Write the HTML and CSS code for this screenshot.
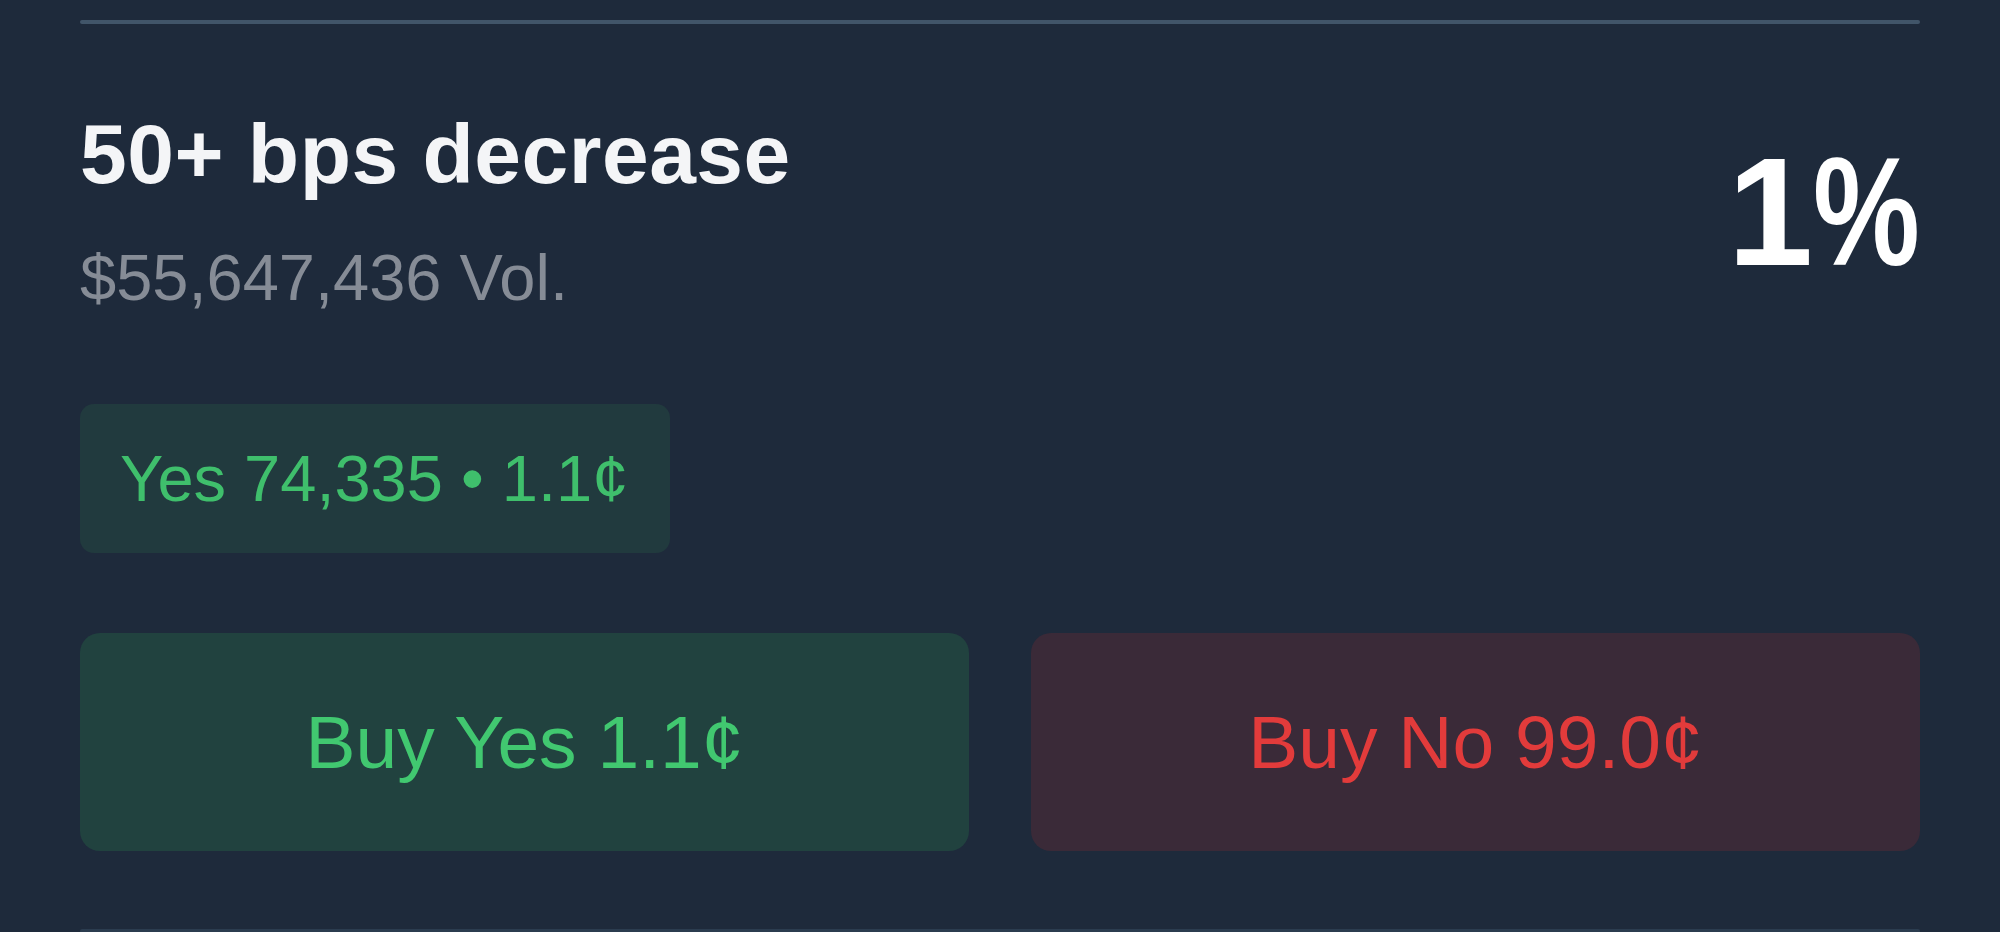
FILE: index.html
```html
<!DOCTYPE html>
<html lang="en">
<head>
<meta charset="utf-8">
<title>50+ bps decrease</title>
<link rel="stylesheet" href="styles.css">
</head>
<body>
<div class="card">
  <div class="rule rule-top"></div>
  <div class="head">
    <div class="info">
      <h2 class="title">50+ bps decrease</h2>
      <div class="vol">$55,647,436 Vol.</div>
    </div>
    <div class="pct">1<span class="pct-sign">%</span></div>
  </div>
  <div class="chip">Yes 74,335 • 1.1¢</div>
  <div class="actions">
    <button class="btn btn-yes">Buy Yes 1.1¢</button>
    <button class="btn btn-no">Buy No 99.0¢</button>
  </div>
  <div class="rule rule-bottom"></div>
</div>
</body>
</html>
```

FILE: styles.css
```css
html, body {
  margin: 0;
  padding: 0;
  background: #1e2a3b;
  height: 100%;
  overflow: hidden;
}

body {
  font-family: "Liberation Sans", Arial, Helvetica, sans-serif;
}

.card {
  padding: 20px 80px 0;
  display: flex;
  flex-direction: column;
}

.rule {
  height: 4px;
  border-radius: 2px;
}

.rule-top {
  background: #415569;
}

.rule-bottom {
  margin-top: 78px;
  background: #2b3c4f;
}

.head {
  margin-top: 88px;
  display: flex;
  justify-content: space-between;
  align-items: flex-start;
}

.title {
  margin: 0;
  font-size: 84px;
  line-height: 1;
  font-weight: 700;
  letter-spacing: 0.5px;
  color: #f4f5f7;
}

.vol {
  margin-top: 49px;
  font-size: 65px;
  line-height: 1;
  color: #868c96;
}

.pct {
  margin-top: 23px;
  font-size: 154px;
  line-height: 1;
  font-weight: 700;
  color: #ffffff;
  white-space: nowrap;
}

.pct-sign {
  display: inline-block;
  transform: scaleX(0.78);
  transform-origin: left center;
  margin-right: -30px;
}

.chip {
  margin-top: 94px;
  align-self: flex-start;
  height: 149px;
  box-sizing: border-box;
  padding: 0 42px 0 40px;
  display: flex;
  align-items: center;
  background: #213a3e;
  border-radius: 14px;
  color: #3fbf6c;
  font-size: 65px;
}

.actions {
  margin-top: 80px;
  display: grid;
  grid-template-columns: 1fr 1fr;
  gap: 62px;
}

.btn {
  height: 218px;
  border: 0;
  border-radius: 20px;
  font-family: inherit;
  font-size: 75px;
  display: flex;
  align-items: center;
  justify-content: center;
  padding: 0;
}

.btn-yes {
  background: #21423f;
  color: #41c870;
}

.btn-no {
  background: #3a2a38;
  color: #e23b3b;
}
```
